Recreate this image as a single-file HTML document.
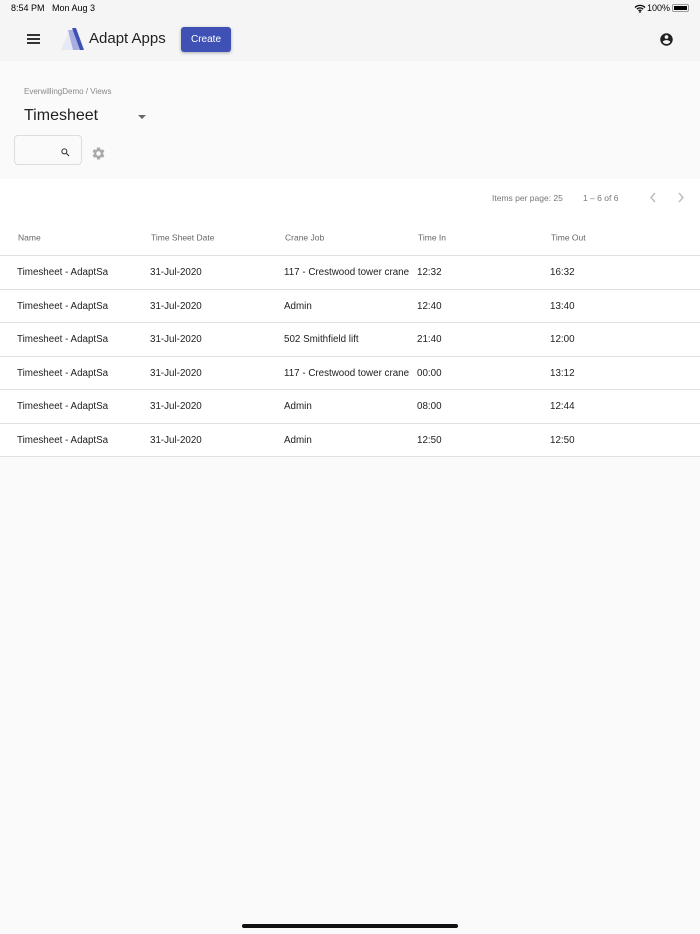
<!DOCTYPE html>
<html><head><style>
*{margin:0;padding:0;box-sizing:border-box}
body{width:700px;height:934px;background:#fafafa;font-family:"Liberation Sans",sans-serif;position:relative;overflow:hidden;color:#212121}
.abs{position:absolute}
.top{left:0;top:0;width:700px;height:61px;background:#f5f5f5}
.tbl{left:0;top:179px;width:700px;height:278px;background:#fff}
.row{position:absolute;left:0;width:700px;border-bottom:1px solid #e0e0e0;font-size:9.8px}
.row span{position:absolute;top:50%;transform:translateY(-45%);white-space:nowrap}
.hd{font-size:8.5px;color:#666}
</style></head><body>
<div class="abs top"></div>
<div class="abs" style="left:11px;top:3px;font-size:9px;color:#000">8:54 PM&nbsp;&nbsp;&nbsp;Mon Aug 3</div>
<svg class="abs" style="left:634px;top:4px" width="12" height="9" viewBox="0 0 12 9"><path d="M1 3.5a7 7 0 0 1 10 0M2.8 5.2a4.5 4.5 0 0 1 6.4 0M4.5 6.8a2 2 0 0 1 3 0" stroke="#000" stroke-width="1.3" fill="none"/><circle cx="6" cy="8" r="0.9"/></svg>
<div class="abs" style="left:647px;top:3px;font-size:9px;color:#000">100%</div>
<div class="abs" style="left:672px;top:4px;width:17px;height:8px;border:1px solid #999;border-radius:2px;padding:1px"><div style="width:100%;height:100%;background:#000"></div></div>
<div class="abs" style="left:27px;top:34px;width:13px;height:2px;background:#333;box-shadow:0 4px 0 #333,0 8px 0 #333"></div>
<svg class="abs" style="left:61px;top:28px" width="24" height="22" viewBox="0 0 24 22"><path d="M0 22L9 2L14 2L14 22Z" fill="#e6e8f5"/><path d="M7 2L12 2L19 22L12 22Z" fill="#a8aedf"/><path d="M11 0L15 0L23 22L19 22Z" fill="#3f51b5"/></svg>
<div class="abs" style="left:89px;top:30px;font-size:15px;color:#222">Adapt Apps</div>
<div class="abs" style="left:181px;top:27px;width:50px;height:25px;background:#3f51b5;border-radius:3px;color:#fff;font-size:10px;font-weight:500;text-align:center;line-height:25px;box-shadow:0 1px 3px rgba(0,0,0,.3)">Create</div>
<svg class="abs" style="left:659px;top:32px" width="15" height="15" viewBox="0 0 24 24"><path fill="#222" d="M12 2C6.48 2 2 6.480 2 12s4.48 10 10 10 10-4.48 10-10S17.52 2 12 2zm0 3c1.66 0 3 1.34 3 3s-1.34 3-3 3-3-1.34-3-3 1.34-3 3-3zm0 14.2c-2.5 0-4.71-1.28-6-3.22.03-1.99 4-3.08 6-3.08 1.99 0 5.970 1.09 6 3.08-1.29 1.94-3.5 3.22-6 3.22z"/></svg>
<div class="abs" style="left:24px;top:87px;font-size:8px;color:#888">EverwillingDemo / Views</div>
<div class="abs" style="left:24px;top:107px;font-size:16px;color:#222">Timesheet</div>
<div class="abs" style="left:138px;top:115px;border-left:4px solid transparent;border-right:4px solid transparent;border-top:4px solid #666"></div>
<div class="abs" style="left:14px;top:135px;width:68px;height:30px;border:1px solid #ddd;border-radius:4px;background:#fafafa"></div>
<svg class="abs" style="left:60px;top:147px" width="11" height="11" viewBox="0 0 24 24"><path fill="#222" d="M15.5 14h-.79l-.28-.27A6.47 6.47 0 0 0 16 9.5 6.5 6.5 0 1 0 9.5 16c1.61 0 3.09-.59 4.23-1.57l.27.28v.79l5 4.99L20.49 19l-4.99-5zm-6 0C7.01 14 5 11.99 5 9.5S7.01 5 9.5 5 14 7.01 14 9.5 11.99 14 9.5 14z"/></svg>
<svg class="abs" style="left:91px;top:146px" width="15" height="15" viewBox="0 0 24 24"><path fill="#aaa" d="M19.14 12.94c.04-.3.06-.61.06-.94 0-.32-.02-.64-.07-.94l2.03-1.58a.49.49 0 0 0 .12-.61l-1.920-3.32a.49.49 0 0 0-.59-.22l-2.39.96c-.5-.38-1.03-.7-1.62-.94l-.36-2.54a.48.48 0 0 0-.48-.41h-3.84c-.24 0-.43.17-.47.41l-.36 2.54c-.59.24-1.13.57-1.62.94l-2.39-.96c-.22-.08-.47 0-.59.22L2.74 8.87c-.12.21-.08.47.12.61l2.03 1.58c-.05.3-.09.63-.09.94s.02.64.07.94l-2.03 1.58a.49.49 0 0 0-.12.61l1.92 3.32c.12.22.37.29.59.22l2.39-.96c.5.38 1.03.7 1.62.94l.36 2.54c.05.24.24.41.48.41h3.84c.24 0 .44-.17.47-.41l.36-2.54c.59-.24 1.13-.56 1.62-.94l2.39.96c.22.08.47 0 .59-.22l1.92-3.32c.12-.22.07-.47-.12-.61l-2.01-1.58zM12 15.6c-1.98 0-3.6-1.62-3.6-3.6s1.62-3.6 3.6-3.6 3.6 1.62 3.6 3.6-1.62 3.6-3.6 3.6z"/></svg>
<div class="abs tbl">
<div class="abs" style="left:492px;top:14px;font-size:8.5px;color:#777">Items per page: 25</div>
<div class="abs" style="left:583px;top:14px;font-size:8.5px;color:#777">1 – 6 of 6</div>
<svg class="abs" style="left:649px;top:13px" width="8" height="11" viewBox="0 0 8 11"><path d="M6 1L2 5.5L6 10" stroke="#bbb" stroke-width="1.4" fill="none"/></svg>
<svg class="abs" style="left:677px;top:13px" width="8" height="11" viewBox="0 0 8 11"><path d="M2 1L6 5.5L2 10" stroke="#bbb" stroke-width="1.4" fill="none"/></svg>
</div>
<div class="row hd" style="top:218px;height:38px"><span style="left:18px">Name</span><span style="left:151px">Time Sheet Date</span><span style="left:285px">Crane Job</span><span style="left:418px">Time In</span><span style="left:551px">Time Out</span></div>
<div class="row" style="top:256px;height:33.5px"><span style="left:17px">Timesheet - AdaptSa</span><span style="left:150px">31-Jul-2020</span><span style="left:284px">117 - Crestwood tower crane</span><span style="left:417px">12:32</span><span style="left:550px">16:32</span></div>
<div class="row" style="top:289.5px;height:33.5px"><span style="left:17px">Timesheet - AdaptSa</span><span style="left:150px">31-Jul-2020</span><span style="left:284px">Admin</span><span style="left:417px">12:40</span><span style="left:550px">13:40</span></div>
<div class="row" style="top:323px;height:33.5px"><span style="left:17px">Timesheet - AdaptSa</span><span style="left:150px">31-Jul-2020</span><span style="left:284px">502 Smithfield lift</span><span style="left:417px">21:40</span><span style="left:550px">12:00</span></div>
<div class="row" style="top:356.5px;height:33.5px"><span style="left:17px">Timesheet - AdaptSa</span><span style="left:150px">31-Jul-2020</span><span style="left:284px">117 - Crestwood tower crane</span><span style="left:417px">00:00</span><span style="left:550px">13:12</span></div>
<div class="row" style="top:390px;height:33.5px"><span style="left:17px">Timesheet - AdaptSa</span><span style="left:150px">31-Jul-2020</span><span style="left:284px">Admin</span><span style="left:417px">08:00</span><span style="left:550px">12:44</span></div>
<div class="row" style="top:423.5px;height:33.5px"><span style="left:17px">Timesheet - AdaptSa</span><span style="left:150px">31-Jul-2020</span><span style="left:284px">Admin</span><span style="left:417px">12:50</span><span style="left:550px">12:50</span></div>
<div class="abs" style="left:242px;top:924px;width:216px;height:4px;border-radius:2px;background:#111"></div>
</body></html>
